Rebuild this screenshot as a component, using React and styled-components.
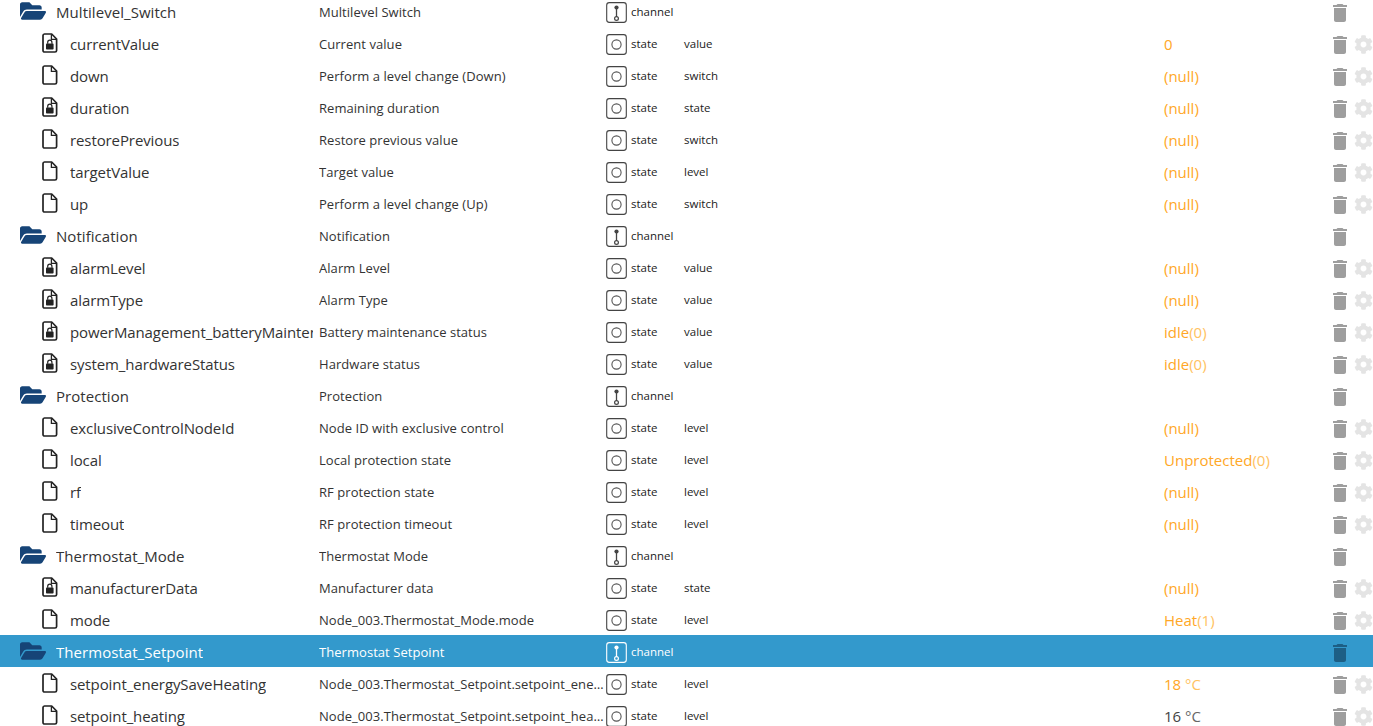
import React from 'react';
import styled, { createGlobalStyle } from 'styled-components';
import { FaFolderOpen, FaCog } from 'react-icons/fa';
import { MdDelete } from 'react-icons/md';

const Global = createGlobalStyle`
  html, body { margin: 0; padding: 0; background: #fff; overflow: hidden; height: 100%; }
  body { font-family: "Open Sans", "Noto Sans", "Liberation Sans", sans-serif; }
`;

const Viewport = styled.div`
  height: 726px;
  overflow: hidden;
`;
const List = styled.div`
  display: flex;
  flex-direction: column;
  margin-top: -5px;
`;
const Row = styled.div`
  display: grid;
  grid-template-columns: 319px 287px 78px 480px 164px 24px 21px;
  box-sizing: border-box;
  height: 32px;
  padding-top: 2px;
  flex: none;
  align-items: center;
  color: ${p => (p.$selected ? '#fff' : '#333')};
  background: ${p => (p.$selected ? '#3399cc' : 'transparent')};
`;
const NameCell = styled.div`
  display: flex;
  align-items: center;
  min-width: 0;
  padding-left: ${p => (p.$channel ? '20px' : '42px')};
  padding-right: 6px;
  overflow: hidden;
  white-space: nowrap;
`;
const IconSlot = styled.span`
  flex: none;
  display: flex;
  align-items: center;
  width: ${p => (p.$channel ? '36px' : '28px')};
  margin-bottom: 2px;
`;
const Name = styled.span`
  font-size: 15px;
  letter-spacing: ${p => (p.$channel ? '0.05px' : '-0.1px')};
  overflow: hidden;
`;
const Desc = styled.div`
  font-size: 13px;
  letter-spacing: 0.05px;
  padding-right: 2px;
  white-space: nowrap;
  overflow: hidden;
  text-overflow: ellipsis;
`;
const TypeCell = styled.div`
  display: flex;
  align-items: center;
  gap: 4px;
  font-size: 11.5px;
  color: ${p => (p.$selected ? '#fff' : '#222')};
`;
const TypeLabel = styled.span`
  margin-top: -2px;
`;
const Role = styled.div`
  font-size: 11.5px;
  margin-top: -2px;
  color: #222;
`;
const Value = styled.div`
  font-size: 15px;
  white-space: nowrap;
  color: ${p => (p.$plain ? '#444' : '#ffa726')};
`;
const Unit = styled.span`
  color: ${p => (p.$plain ? '#666' : '#ffc261')};
`;
const Actions = styled.div`
  display: flex;
  align-items: center;
  justify-content: center;
  margin-top: 2px;
  color: ${p => (p.$selected ? '#1d5f85' : '#9e9e9e')};
`;
const Gear = styled.div`
  display: flex;
  align-items: center;
  justify-content: flex-end;
  color: #e4e4e4;
`;

const FileIcon = ({ locked }) => (
  <svg width="16" height="20" viewBox="0 0 16 20">
    <path d="M2.5 1h7.2L14.6 6v11.4a1.6 1.6 0 0 1-1.6 1.6H2.6A1.6 1.6 0 0 1 1 17.4V2.6A1.6 1.6 0 0 1 2.5 1z" fill="none" stroke="#222" strokeWidth="1.7" strokeLinejoin="round" />
    <path d="M9.4 1.2V6.3h5" fill="none" stroke="#222" strokeWidth="1.3" />
    {locked && (
      <>
        <rect x="4" y="10.6" width="7.6" height="6" rx="0.8" fill="#222" />
        <path d="M5.7 10.8V9.2a2.1 2.1 0 0 1 4.2 0v1.6" fill="none" stroke="#222" strokeWidth="1.2" />
      </>
    )}
  </svg>
);

const TypeBox = styled.svg`
  flex: none;
  display: block;
  margin-top: 1px;
`;
const ChannelIcon = ({ color }) => (
  <TypeBox width="21" height="21" viewBox="0 0 21 21">
    <rect x="0.7" y="0.6" width="19.6" height="19.8" rx="2.6" fill="none" stroke={color} strokeWidth="1.1" />
    <line x1="10.5" y1="5" x2="10.5" y2="15" stroke={color} strokeWidth="1.3" />
    <circle cx="10.5" cy="5.5" r="2.1" fill={color} />
    <circle cx="10.5" cy="16.5" r="1.9" fill="none" stroke={color} strokeWidth="1.2" />
  </TypeBox>
);
const StateIcon = () => (
  <TypeBox width="21" height="21" viewBox="0 0 21 21">
    <rect x="0.7" y="0.6" width="19.6" height="19.8" rx="2.6" fill="none" stroke="#444" strokeWidth="1.1" />
    <circle cx="10.5" cy="10.5" r="4.6" fill="none" stroke="#555" strokeWidth="1.1" />
  </TypeBox>
);

const rows = [
  { c: 1, n: 'Multilevel_Switch', d: 'Multilevel Switch' },
  { n: 'currentValue', l: 1, d: 'Current value', r: 'value', v: '0' },
  { n: 'down', d: 'Perform a level change (Down)', r: 'switch', v: '(null)' },
  { n: 'duration', l: 1, d: 'Remaining duration', r: 'state', v: '(null)' },
  { n: 'restorePrevious', d: 'Restore previous value', r: 'switch', v: '(null)' },
  { n: 'targetValue', d: 'Target value', r: 'level', v: '(null)' },
  { n: 'up', d: 'Perform a level change (Up)', r: 'switch', v: '(null)' },
  { c: 1, n: 'Notification', d: 'Notification' },
  { n: 'alarmLevel', l: 1, d: 'Alarm Level', r: 'value', v: '(null)' },
  { n: 'alarmType', l: 1, d: 'Alarm Type', r: 'value', v: '(null)' },
  { n: 'powerManagement_batteryMaintenanceStatus', l: 1, d: 'Battery maintenance status', r: 'value', v: 'idle', u: '(0)' },
  { n: 'system_hardwareStatus', l: 1, d: 'Hardware status', r: 'value', v: 'idle', u: '(0)' },
  { c: 1, n: 'Protection', d: 'Protection' },
  { n: 'exclusiveControlNodeId', d: 'Node ID with exclusive control', r: 'level', v: '(null)' },
  { n: 'local', d: 'Local protection state', r: 'level', v: 'Unprotected', u: '(0)' },
  { n: 'rf', d: 'RF protection state', r: 'level', v: '(null)' },
  { n: 'timeout', d: 'RF protection timeout', r: 'level', v: '(null)' },
  { c: 1, n: 'Thermostat_Mode', d: 'Thermostat Mode' },
  { n: 'manufacturerData', l: 1, d: 'Manufacturer data', r: 'state', v: '(null)' },
  { n: 'mode', d: 'Node_003.Thermostat_Mode.mode', r: 'level', v: 'Heat', u: '(1)' },
  { c: 1, s: 1, n: 'Thermostat_Setpoint', d: 'Thermostat Setpoint' },
  { n: 'setpoint_energySaveHeating', d: 'Node_003.Thermostat_Setpoint.setpoint_energySaveHeating', r: 'level', v: '18', u: ' °C' },
  { n: 'setpoint_heating', d: 'Node_003.Thermostat_Setpoint.setpoint_heating', r: 'level', v: '16', u: ' °C', p: 1 },
];

export default function App() {
  return (
    <Viewport>
      <Global />
      <List>
        {rows.map(r => (
          <Row key={r.n} $selected={r.s}>
            <NameCell $channel={r.c}>
              <IconSlot $channel={r.c}>
                {r.c ? <FaFolderOpen size={26} color="#164477" /> : <FileIcon locked={r.l} />}
              </IconSlot>
              <Name $channel={r.c}>{r.n}</Name>
            </NameCell>
            <Desc>{r.d}</Desc>
            <TypeCell $selected={r.s}>
              {r.c ? <ChannelIcon color={r.s ? '#fff' : '#444'} /> : <StateIcon />}
              <TypeLabel>{r.c ? 'channel' : 'state'}</TypeLabel>
            </TypeCell>
            <Role>{r.r}</Role>
            <Value $plain={r.p}>
              {r.v}
              {r.u && <Unit $plain={r.p}>{r.u}</Unit>}
            </Value>
            <Actions $selected={r.s}><MdDelete size={24} /></Actions>
            <Gear>{!r.c && <FaCog size={19} />}</Gear>
          </Row>
        ))}
      </List>
    </Viewport>
  );
}
